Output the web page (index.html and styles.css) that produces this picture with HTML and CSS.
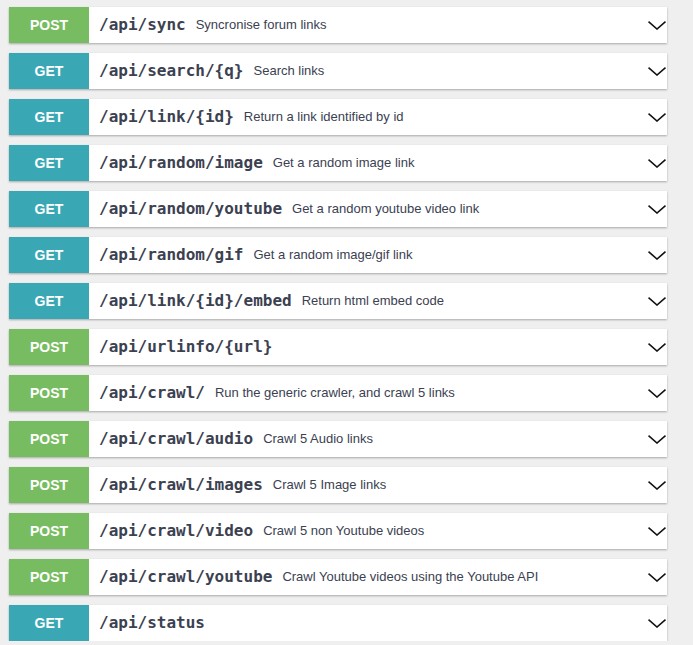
FILE: index.html
```html
<!DOCTYPE html>
<html>
<head>
<meta charset="utf-8">
<link rel="stylesheet" href="styles.css">
</head>
<body>
<div class="list">
  <div class="op post"><span class="method">POST</span><span class="path">/api/sync</span><span class="desc">Syncronise forum links</span><svg class="chev" viewBox="0 0 18 9"><path d="M0.5 0.7 L9 8 L17.5 0.7"/></svg></div>
  <div class="op get"><span class="method">GET</span><span class="path">/api/search/{q}</span><span class="desc">Search links</span><svg class="chev" viewBox="0 0 18 9"><path d="M0.5 0.7 L9 8 L17.5 0.7"/></svg></div>
  <div class="op get"><span class="method">GET</span><span class="path">/api/link/{id}</span><span class="desc">Return a link identified by id</span><svg class="chev" viewBox="0 0 18 9"><path d="M0.5 0.7 L9 8 L17.5 0.7"/></svg></div>
  <div class="op get"><span class="method">GET</span><span class="path">/api/random/image</span><span class="desc">Get a random image link</span><svg class="chev" viewBox="0 0 18 9"><path d="M0.5 0.7 L9 8 L17.5 0.7"/></svg></div>
  <div class="op get"><span class="method">GET</span><span class="path">/api/random/youtube</span><span class="desc">Get a random youtube video link</span><svg class="chev" viewBox="0 0 18 9"><path d="M0.5 0.7 L9 8 L17.5 0.7"/></svg></div>
  <div class="op get"><span class="method">GET</span><span class="path">/api/random/gif</span><span class="desc">Get a random image/gif link</span><svg class="chev" viewBox="0 0 18 9"><path d="M0.5 0.7 L9 8 L17.5 0.7"/></svg></div>
  <div class="op get"><span class="method">GET</span><span class="path">/api/link/{id}/embed</span><span class="desc">Return html embed code</span><svg class="chev" viewBox="0 0 18 9"><path d="M0.5 0.7 L9 8 L17.5 0.7"/></svg></div>
  <div class="op post"><span class="method">POST</span><span class="path">/api/urlinfo/{url}</span><svg class="chev" viewBox="0 0 18 9"><path d="M0.5 0.7 L9 8 L17.5 0.7"/></svg></div>
  <div class="op post"><span class="method">POST</span><span class="path">/api/crawl/</span><span class="desc">Run the generic crawler, and crawl 5 links</span><svg class="chev" viewBox="0 0 18 9"><path d="M0.5 0.7 L9 8 L17.5 0.7"/></svg></div>
  <div class="op post"><span class="method">POST</span><span class="path">/api/crawl/audio</span><span class="desc">Crawl 5 Audio links</span><svg class="chev" viewBox="0 0 18 9"><path d="M0.5 0.7 L9 8 L17.5 0.7"/></svg></div>
  <div class="op post"><span class="method">POST</span><span class="path">/api/crawl/images</span><span class="desc">Crawl 5 Image links</span><svg class="chev" viewBox="0 0 18 9"><path d="M0.5 0.7 L9 8 L17.5 0.7"/></svg></div>
  <div class="op post"><span class="method">POST</span><span class="path">/api/crawl/video</span><span class="desc">Crawl 5 non Youtube videos</span><svg class="chev" viewBox="0 0 18 9"><path d="M0.5 0.7 L9 8 L17.5 0.7"/></svg></div>
  <div class="op post"><span class="method">POST</span><span class="path">/api/crawl/youtube</span><span class="desc">Crawl Youtube videos using the Youtube API</span><svg class="chev" viewBox="0 0 18 9"><path d="M0.5 0.7 L9 8 L17.5 0.7"/></svg></div>
  <div class="op get"><span class="method">GET</span><span class="path">/api/status</span><svg class="chev" viewBox="0 0 18 9"><path d="M0.5 0.7 L9 8 L17.5 0.7"/></svg></div>
</div>
</body>
</html>
```
FILE: styles.css
```css
html, body {
  margin: 0;
  background: #efefef;
}
body {
  padding: 7px 26px 0 9px;
  font-family: "Liberation Sans", Arial, sans-serif;
}
.list {
  display: flex;
  flex-direction: column;
  gap: 10px;
}
.op {
  display: flex;
  align-items: center;
  height: 36px;
  background: #fff;
  box-shadow: 0 1px 2px rgba(0, 0, 0, 0.3);
}
.method {
  flex: 0 0 80px;
  align-self: stretch;
  display: flex;
  align-items: center;
  justify-content: center;
  color: #fff;
  font-weight: bold;
  font-size: 14px;
}
.post .method { background: #78bc61; }
.get .method { background: #3aa8b4; }
.path {
  margin-left: 10px;
  margin-bottom: 2px;
  font-family: "DejaVu Sans Mono", monospace;
  font-weight: bold;
  font-size: 16px;
  color: #3b4151;
}
.desc {
  margin-left: 10px;
  margin-bottom: 2px;
  font-size: 13px;
  color: #3b4151;
}
.chev {
  margin-left: auto;
  margin-right: 1px;
  width: 18px;
  height: 9px;
  fill: none;
  stroke: #111;
  stroke-width: 1.6;
}
```
